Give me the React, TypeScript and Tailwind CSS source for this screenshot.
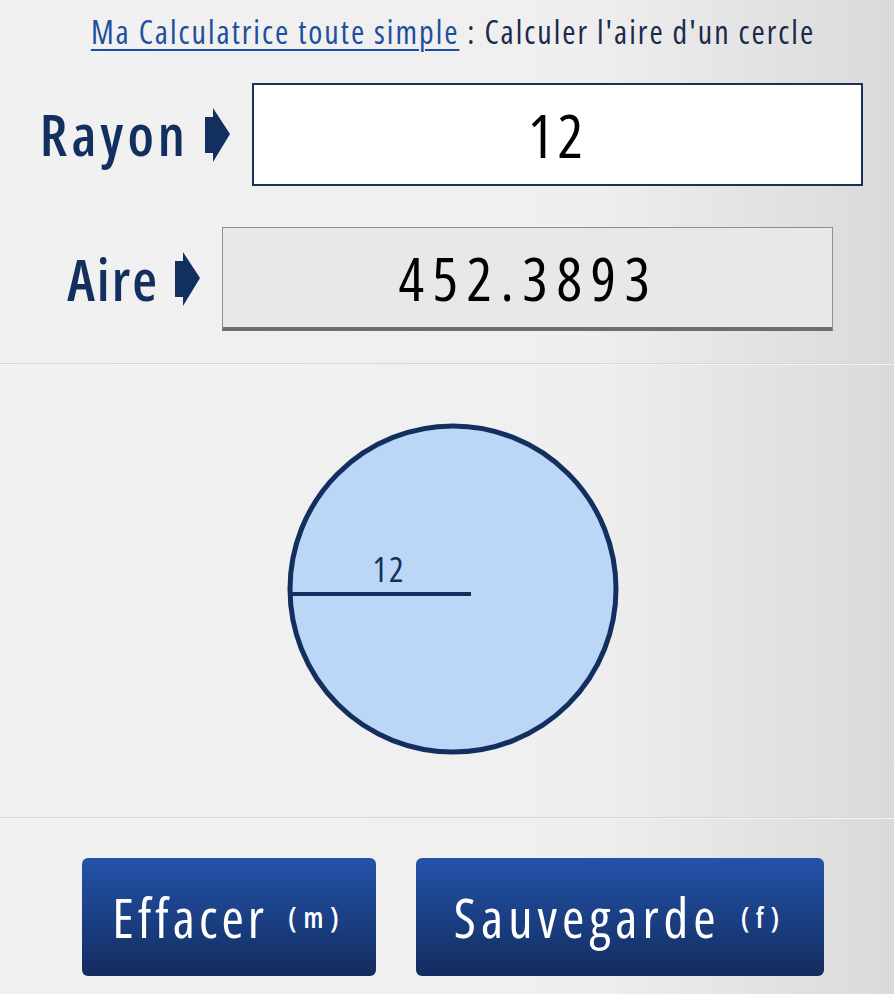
import React from "react";

// Open Sans is a variable font here: squeezing the width axis gives the narrow look of the original
const FONT = "font-['Open_Sans',sans-serif] [font-stretch:75%]";

function Arrow({ className }: { className?: string }) {
  return (
    <svg viewBox="0 0 25 54" className={className} aria-hidden="true">
      <polygon points="0,9 8,9 8,0 25,26 8,54 8,45 0,45" fill="#132f5f" />
    </svg>
  );
}

function Divider() {
  return <div className="h-[2px] w-full border-b border-white/70 bg-[#d6d6d6]" />;
}

export default function App() {
  const rayon = 12;
  const aire = (Math.PI * rayon * rayon).toFixed(4);

  return (
    <div
      className={`min-h-[994px] w-full bg-[linear-gradient(to_right,#f1f1f1_0%,#efefef_65%,#dadada_100%)] ${FONT}`}
    >
      <h1 className="pt-[12px] pl-[12px] text-center text-[32px] leading-[40px] tracking-[2px] text-[#1a2b4c]">
        <a href="#" className="text-[#1d4f9e] underline decoration-2 underline-offset-[5px]">
          Ma Calculatrice toute simple
        </a>{" "}
        : Calculer l'aire d'un cercle
      </h1>

      <div className="mt-[31px] flex items-center">
        <label className="flex w-[230px] items-center justify-end gap-[16px]">
          <span className="text-[57px] leading-none font-semibold tracking-[4px] text-[#132f5f]">Rayon</span>
          <Arrow className="h-[54px] w-[25px]" />
        </label>
        <input
          value={rayon}
          readOnly
          className="ml-[22px] h-[103px] w-[611px] border-2 border-[#1a3160] bg-white text-center text-[60px] font-medium tracking-[4px] text-black outline-none"
        />
      </div>

      <div className="mt-[41px] flex items-center">
        <div className="flex w-[200px] items-center justify-end gap-[16px]">
          <span className="text-[57px] leading-none font-semibold tracking-[2px] text-[#132f5f]">Aire</span>
          <Arrow className="h-[54px] w-[25px]" />
        </div>
        <div className="ml-[22px] flex h-[104px] w-[611px] items-center justify-center border border-b-[4px] border-[#8f8f8f] border-b-[#6e6e6e] bg-[#e8e8e8] pl-[2px] text-[60px] font-medium tracking-[8.5px] text-black">
          {aire}
        </div>
      </div>

      <div className="mt-[32px]">
        <Divider />
      </div>

      <div className="flex h-[452px] items-center justify-center">
        <svg width="340" height="340" viewBox="0 0 340 340" className="-mt-[4px] ml-[12px]">
          <circle cx="170" cy="170" r="163" fill="#bcd6f7" stroke="#132f5f" strokeWidth="5" />
          <line x1="7" y1="175" x2="188" y2="175" stroke="#132f5f" strokeWidth="4" />
          <text
            x="106"
            y="163"
            textAnchor="middle"
            fontSize="34"
            fontWeight="500"
            fill="#132f5f"
            letterSpacing="2"
            style={{ fontFamily: "'Open Sans', sans-serif", fontStretch: "75%" }}
          >
            {rayon}
          </text>
        </svg>
      </div>

      <Divider />

      <div className="mt-[39px] flex gap-[40px] pl-[82px]">
        <button className="flex h-[118px] w-[294px] items-center justify-center gap-[20px] rounded-[6px] bg-[linear-gradient(to_bottom,#2353aa,#132c5e)] text-white">
          <span className="text-[54px] font-medium tracking-[4px]">Effacer</span>
          <span className="text-[28px] font-semibold tracking-[7px]">(m)</span>
        </button>
        <button className="flex h-[118px] w-[408px] items-center justify-center gap-[20px] rounded-[6px] bg-[linear-gradient(to_bottom,#2353aa,#132c5e)] text-white">
          <span className="text-[54px] font-medium tracking-[5px]">Sauvegarde</span>
          <span className="text-[28px] font-semibold tracking-[7px]">(f)</span>
        </button>
      </div>
    </div>
  );
}
